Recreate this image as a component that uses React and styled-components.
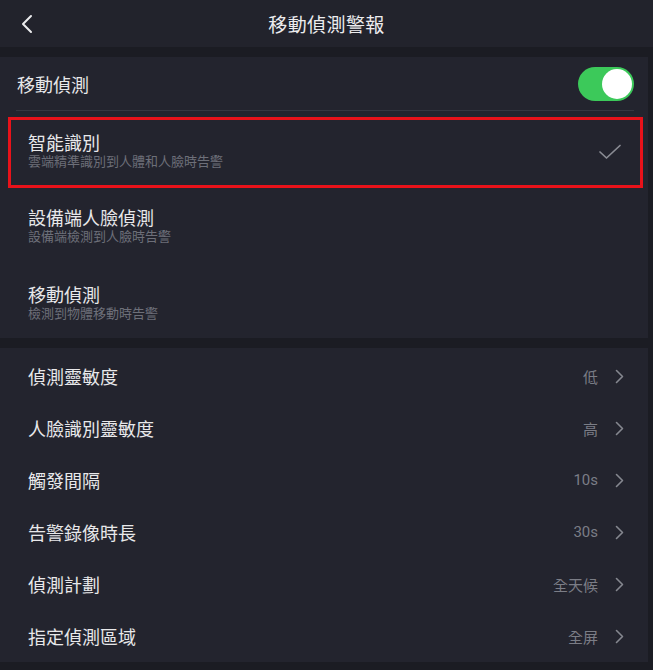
import React from "react";
import styled, { createGlobalStyle } from "styled-components";

const GlobalStyle = createGlobalStyle`
  html, body { margin: 0; padding: 0; background: #1b1c23; }
  body {
    font-family: "Noto Sans CJK TC", "Noto Sans", Roboto, sans-serif;
    -webkit-font-smoothing: antialiased;
  }
`;

const Page = styled.div`
  width: 653px;
  height: 670px;
  display: flex;
  flex-direction: column;
  overflow: hidden;
  background: #1b1c23;
`;

const Header = styled.header`
  height: 47px;
  flex: none;
  display: grid;
  grid-template-columns: 60px 1fr 60px;
  align-items: center;
  background: #22232c;
`;

const BackButton = styled.button`
  border: 0;
  background: none;
  padding: 0 0 0 20px;
  height: 100%;
  display: flex;
  align-items: center;
  cursor: pointer;
`;

const Title = styled.h1`
  margin: 0;
  text-align: center;
  font-size: 19px;
  font-weight: 400;
  color: #ececee;
  letter-spacing: 0.4px;
`;

const Band = styled.div`
  height: ${(p) => p.$h}px;
  flex: none;
  background: #1b1c23;
`;

const Section = styled.section`
  flex: none;
  background: #23242e;
  margin-right: 5px;
  padding-top: ${(p) => p.$pt || 0}px;
`;

const ToggleRow = styled.div`
  height: 53px;
  display: flex;
  align-items: center;
  justify-content: space-between;
  padding: 0 14px 0 17px;
`;

const RowLabel = styled.span`
  font-size: 18px;
  color: #e8e8ea;
  line-height: 24px;
`;

const Switch = styled.div`
  width: 56px;
  height: 34px;
  border-radius: 17px;
  background: #3cc95a;
  display: flex;
  align-items: center;
  justify-content: flex-end;
  padding: 0 2px;
  box-sizing: border-box;
`;

const Knob = styled.div`
  width: 30px;
  height: 30px;
  border-radius: 50%;
  background: #ffffff;
`;

const Divider = styled.div`
  height: 1px;
  margin: 0 14px 0 16px;
  background: #363741;
`;

const Highlight = styled.div`
  margin: 6px 5px 0 8px;
  border: 3px solid #e8121a;
`;

const OptionRow = styled.div`
  height: ${(p) => p.$h}px;
  box-sizing: border-box;
  padding: ${(p) => p.$pt}px ${(p) => p.$pr || 28}px 0 ${(p) => p.$pl || 28}px;
  display: flex;
  align-items: flex-start;
  justify-content: space-between;
`;

const OptionText = styled.div`
  display: flex;
  flex-direction: column;
`;

const OptionTitle = styled.span`
  font-size: 18px;
  line-height: 23px;
  color: #e8e8ea;
`;

const OptionSub = styled.span`
  font-size: 13px;
  line-height: 14px;
  color: #6d6f79;
`;

const CheckWrap = styled.div`
  padding-top: 13px;
  display: flex;
`;

const ListRow = styled.div`
  height: 52px;
  display: flex;
  align-items: center;
  justify-content: space-between;
  padding: 0 24px 0 28px;
`;

const ValueGroup = styled.div`
  display: flex;
  align-items: center;
  gap: 17px;
`;

const Value = styled.span`
  font-size: 15px;
  color: #7b7d86;
  font-family: Roboto, "Noto Sans CJK TC", sans-serif;
`;

const Chevron = () => (
  <svg width="9" height="15" viewBox="0 0 9 15">
    <path d="M1.5 1.5 L7.5 7.5 L1.5 13.5" fill="none" stroke="#85878f" strokeWidth="1.6" strokeLinecap="round" strokeLinejoin="round" />
  </svg>
);

const BackIcon = () => (
  <svg width="14" height="20" viewBox="0 0 14 20">
    <path d="M11 2 L3 10 L11 18" fill="none" stroke="#ececee" strokeWidth="2" strokeLinecap="round" strokeLinejoin="round" />
  </svg>
);

const Check = () => (
  <svg width="24" height="16" viewBox="0 0 24 16">
    <path d="M2 8 L8.5 14 L22 1.5" fill="none" stroke="#8a8c94" strokeWidth="1.7" strokeLinecap="round" strokeLinejoin="round" />
  </svg>
);

const settings = [
  ["偵測靈敏度", "低"],
  ["人臉識別靈敏度", "高"],
  ["觸發間隔", "10s"],
  ["告警錄像時長", "30s"],
  ["偵測計劃", "全天候"],
  ["指定偵測區域", "全屏"],
];

export default function App() {
  return (
    <Page>
      <GlobalStyle />
      <Header>
        <BackButton aria-label="back">
          <BackIcon />
        </BackButton>
        <Title>移動偵測警報</Title>
        <div />
      </Header>
      <Band $h={10} />
      <Section>
        <ToggleRow>
          <RowLabel>移動偵測</RowLabel>
          <Switch>
            <Knob />
          </Switch>
        </ToggleRow>
        <Divider />
        <Highlight>
          <OptionRow $h={65} $pt={11} $pl={17} $pr={18}>
            <OptionText>
              <OptionTitle>智能識別</OptionTitle>
              <OptionSub>雲端精準識別到人體和人臉時告警</OptionSub>
            </OptionText>
            <CheckWrap>
              <Check />
            </CheckWrap>
          </OptionRow>
        </Highlight>
        <OptionRow $h={75} $pt={18}>
          <OptionText>
            <OptionTitle>設備端人臉偵測</OptionTitle>
            <OptionSub>設備端檢測到人臉時告警</OptionSub>
          </OptionText>
        </OptionRow>
        <OptionRow $h={75} $pt={20}>
          <OptionText>
            <OptionTitle>移動偵測</OptionTitle>
            <OptionSub>檢測到物體移動時告警</OptionSub>
          </OptionText>
        </OptionRow>
      </Section>
      <Band $h={10} />
      <Section $pt={2}>
        {settings.map(([label, value]) => (
          <ListRow key={label}>
            <RowLabel>{label}</RowLabel>
            <ValueGroup>
              <Value>{value}</Value>
              <Chevron />
            </ValueGroup>
          </ListRow>
        ))}
      </Section>
      <Band $h={10} />
    </Page>
  );
}
